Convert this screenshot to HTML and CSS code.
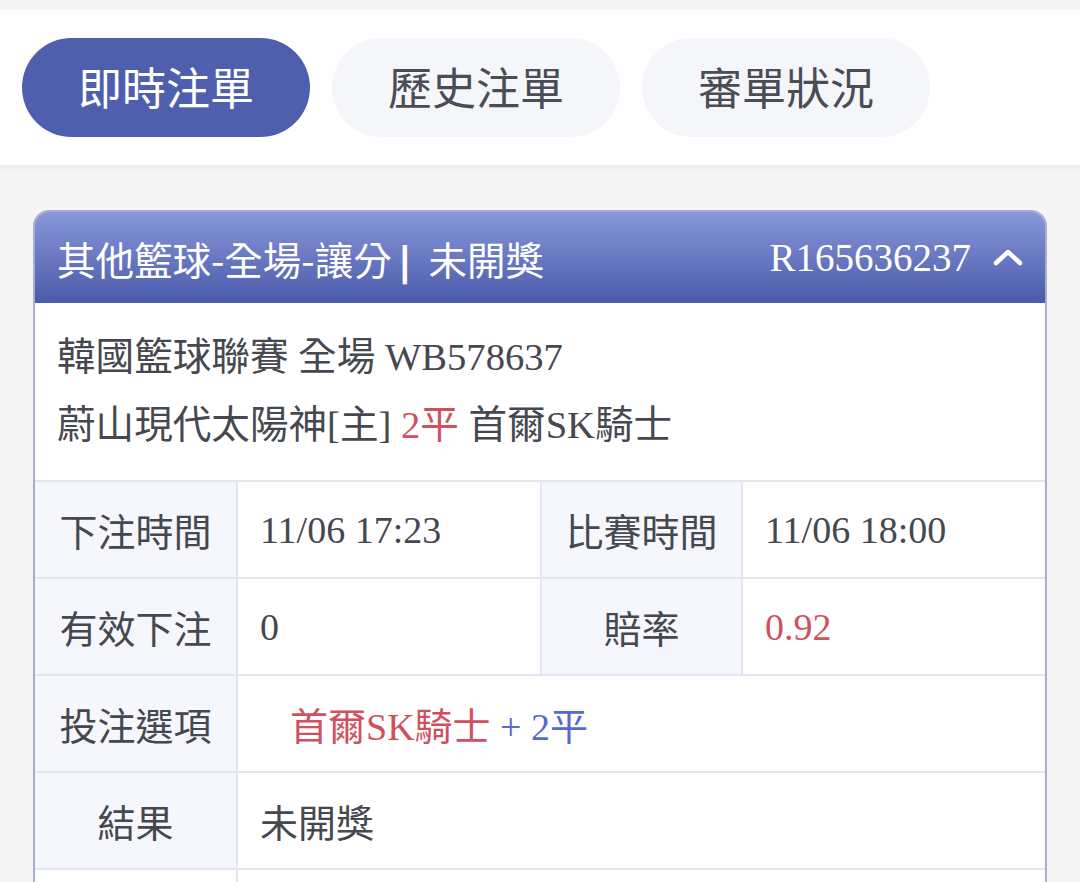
FILE: index.html
```html
<!DOCTYPE html>
<html lang="zh-Hant">
<head>
  <meta charset="UTF-8" />
  <meta name="viewport" content="width=device-width, initial-scale=1" />
  <title>即時注單</title>
  <link rel="stylesheet" href="styles.css">
</head>
<body>
  <header class="tabbar">
    <a href="#" class="tab active">即時注單</a>
    <a href="#" class="tab">歷史注單</a>
    <a href="#" class="tab">審單狀況</a>
  </header>

  <main>
    <section class="bet-card">
      <div class="bet-head">
        <div class="bet-title">其他籃球-全場-讓分<span class="sep">|</span> 未開獎</div>
        <div class="bet-no">
          R165636237
          <svg class="chevron" width="30" height="18" viewBox="0 0 30 18">
            <path d="M3 15 L15 4 L27 15" fill="none" stroke="#fff" stroke-width="4.5" stroke-linecap="round" stroke-linejoin="round"/>
          </svg>
        </div>
      </div>

      <div class="bet-match">
        <p>韓國籃球聯賽 全場 WB578637</p>
        <p>蔚山現代太陽神[主] <span class="red">2平</span> 首爾SK騎士</p>
      </div>

      <div class="bet-table">
        <div class="cell label">下注時間</div>
        <div class="cell value">11/06 17:23</div>
        <div class="cell label">比賽時間</div>
        <div class="cell value">11/06 18:00</div>

        <div class="cell label">有效下注</div>
        <div class="cell value">0</div>
        <div class="cell label">賠率</div>
        <div class="cell value red">0.92</div>

        <div class="cell label">投注選項</div>
        <div class="cell value wide pick"><span><span class="red">首爾SK騎士</span> <span class="blue">+ 2平</span></span></div>

        <div class="cell label">結果</div>
        <div class="cell value wide">未開獎</div>

        <div class="cell label blank"></div>
        <div class="cell value wide"></div>
      </div>
    </section>
  </main>
</body>
</html>
```

FILE: styles.css
```css
body {
  margin: 0;
  background: #f5f5f6;
  color: #46484f;
  font-family: "Liberation Serif", "Noto Sans CJK TC", serif;
  height: 882px;
  overflow: hidden;
}
/* top tabs */
.tabbar {
  margin-top: 10px;
  background: #fff;
  display: flex;
  gap: 22px;
  padding: 28px 22px 28px;
  box-shadow: 0 3px 6px rgba(0,0,0,0.05);
}
.tab {
  width: 288px;
  height: 99px;
  border-radius: 50px;
  background: #f5f6fa;
  color: #4a4c56;
  text-decoration: none;
  font-family: "Noto Sans CJK TC", sans-serif;
  font-size: 44px;
  line-height: 1;
  padding-bottom: 4px;
  box-sizing: border-box;
  display: flex;
  align-items: center;
  justify-content: center;
}
.tab.active {
  background: #4f5fad;
  color: #fff;
}
main {
  padding: 45px 33px 0;
}
/* bet card */
.bet-card {
  border: 2px solid #a8aecd;
  border-bottom: none;
  border-radius: 16px 16px 0 0;
  background: #fff;
  overflow: hidden;
}
.bet-head {
  height: 91px;
  background: linear-gradient(#8896da, #4b5aa9);
  color: #fff;
  display: flex;
  align-items: center;
  justify-content: space-between;
  padding: 0 22px 0 22px;
  font-size: 38px;
}
.bet-title {
  font-family: "Noto Sans CJK TC", sans-serif;
  font-size: 38.5px;
  word-spacing: 6px;
}
.bet-title .sep {
  font-family: "DejaVu Sans", sans-serif;
  font-weight: bold;
  margin: 0 2px 0 6px;
}
.bet-no {
  display: flex;
  align-items: center;
  gap: 22px;
  font-size: 39px;
}
.chevron {
  display: block;
  margin-top: -2px;
}
.bet-match {
  padding: 20px 22px 21px;
  font-size: 38.6px;
}
.bet-match p {
  margin: 0;
  line-height: 68px;
}
.red {
  color: #d0505f;
}
.blue {
  color: #5868d6;
}
/* detail table */
.bet-table {
  display: grid;
  grid-template-columns: 203px 304px 201px 1fr;
  border-top: 2px solid #e3e5f0;
  font-size: 38px;
}
.cell {
  height: 97px;
  box-sizing: border-box;
  border-right: 2px solid #e3e5f0;
  border-bottom: 2px solid #e3e5f0;
  display: flex;
  align-items: center;
}
.cell:nth-child(4n) {
  border-right: none;
}
.label {
  background: #f5f7fc;
  justify-content: center;
}
.label.blank {
  background: #fff;
}
.value {
  padding-left: 22px;
}
.value.wide {
  grid-column: span 3;
  border-right: none;
}
.value.pick {
  padding-left: 52px;
}
```
